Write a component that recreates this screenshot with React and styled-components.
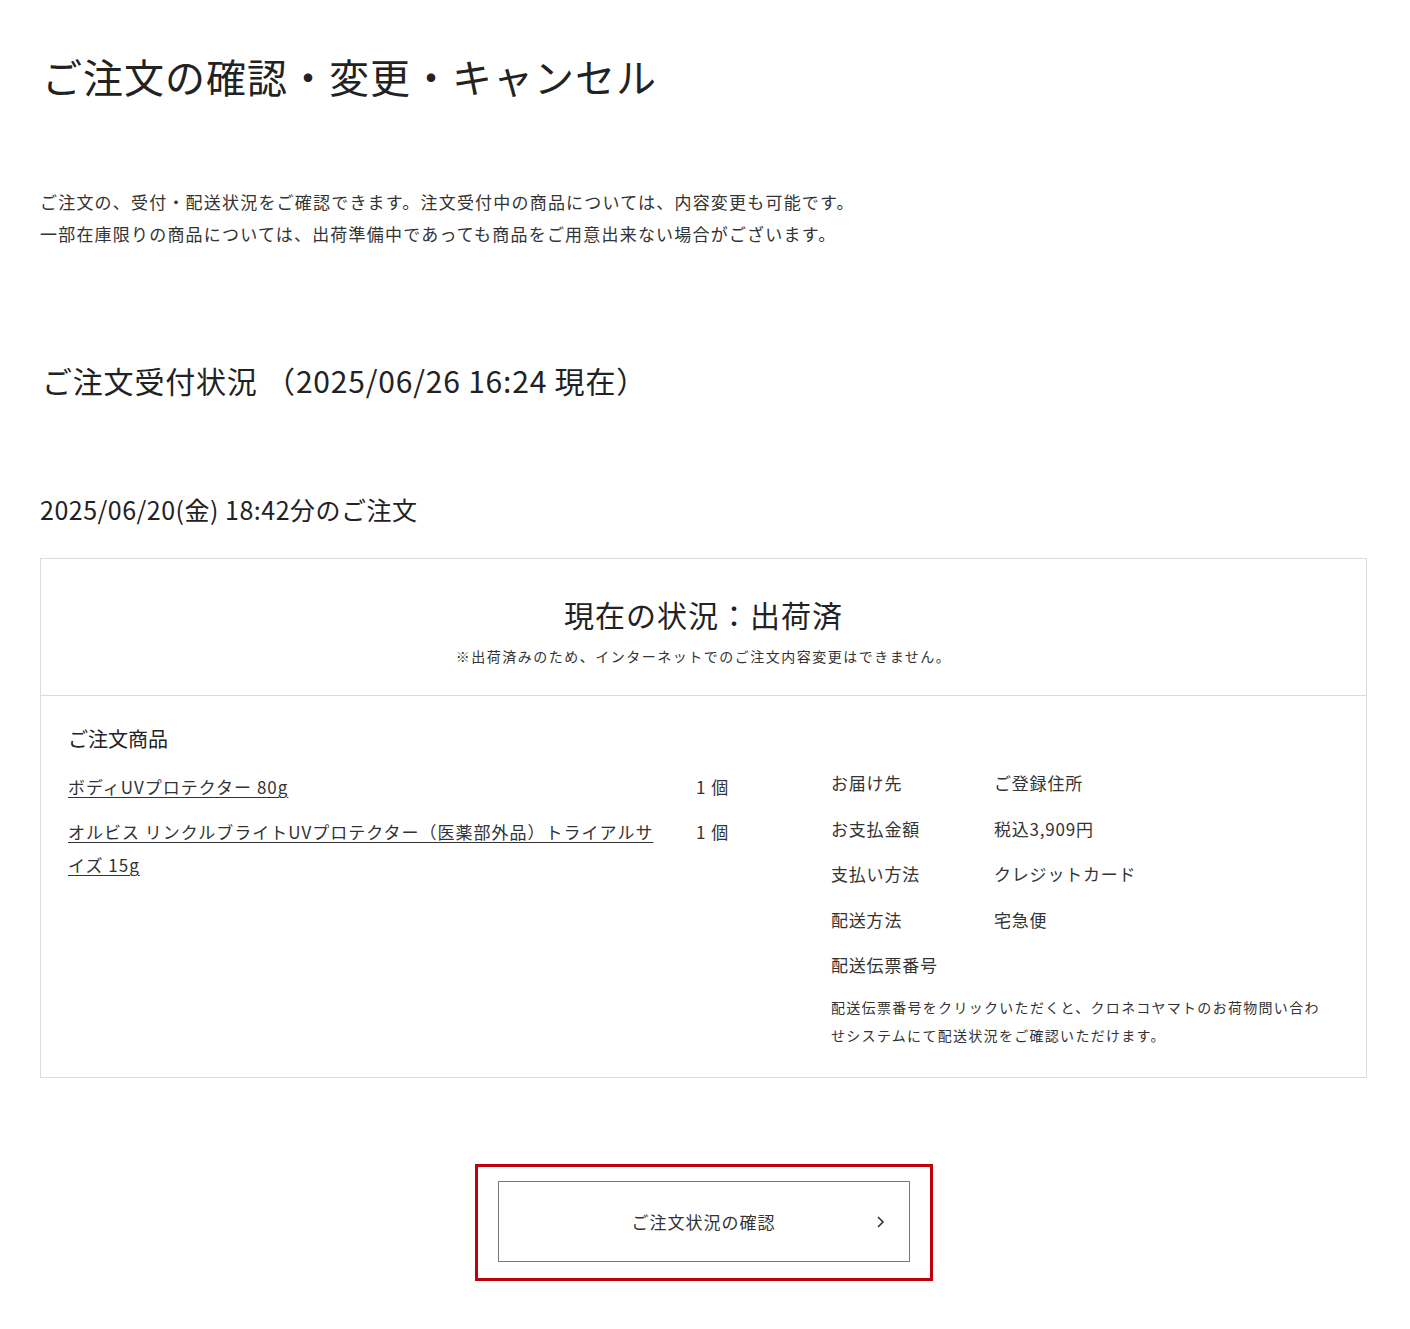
import React from "react";
import styled, { createGlobalStyle } from "styled-components";

const GlobalStyle = createGlobalStyle`
  html, body { margin: 0; padding: 0; background: #fff; }
  body {
    font-family: "Noto Sans CJK JP", "Open Sans", sans-serif;
    color: #333;
    -webkit-font-smoothing: antialiased;
  }
  * { box-sizing: border-box; }
`;

const Page = styled.main`
  width: 1410px;
  min-height: 1329px;
  padding: 48px 43px 48px 40px;
`;

const Title = styled.h1`
  margin: 0 0 0 2px;
  font-size: 40px;
  line-height: 56px;
  font-weight: 400;
  letter-spacing: 1px;
  color: #222;
`;

const Intro = styled.p`
  margin: 82px 0 0;
  font-size: 17px;
  line-height: 32px;
  letter-spacing: 1.2px;
  color: #333;
`;

const SectionTitle = styled.h2`
  margin: 109px 0 0 2px;
  font-size: 30px;
  line-height: 42px;
  font-weight: 400;
  letter-spacing: 0.8px;
  color: #222;
`;

const OrderDate = styled.h3`
  margin: 90px 0 31px;
  font-size: 25px;
  line-height: 36px;
  font-weight: 400;
  letter-spacing: 0.5px;
  color: #222;
`;

const Card = styled.section`
  border: 1px solid #dcdcdc;
`;

const StatusHead = styled.div`
  display: flex;
  flex-direction: column;
  align-items: center;
  gap: 10px;
  padding: 34px 20px 28px;
  border-bottom: 1px solid #dcdcdc;
`;

const StatusTitle = styled.div`
  font-size: 30px;
  line-height: 42px;
  letter-spacing: 1px;
  color: #222;
`;

const StatusNote = styled.div`
  font-size: 14px;
  line-height: 22px;
  letter-spacing: 1.5px;
  color: #333;
`;

const Body = styled.div`
  padding: 29px 40px 28px 27px;
`;

const BodyHeading = styled.div`
  font-size: 20px;
  line-height: 28px;
  color: #222;
  margin-bottom: 16px;
`;

const Columns = styled.div`
  display: grid;
  grid-template-columns: 763px 1fr;
`;

const ItemList = styled.ul`
  list-style: none;
  margin: 0;
  padding: 1px 0 0;
  display: flex;
  flex-direction: column;
  gap: 12px;
`;

const Item = styled.li`
  display: flex;
  align-items: flex-start;
`;

const ItemName = styled.a`
  width: 628px;
  padding-right: 30px;
  font-size: 17px;
  line-height: 33px;
  letter-spacing: 1px;
  color: #333;
  text-decoration: underline;
  text-underline-offset: 3px;
  text-decoration-thickness: 1px;
`;

const Qty = styled.span`
  font-size: 17px;
  line-height: 33px;
  color: #333;
  letter-spacing: 1px;
`;

const Details = styled.div`
  display: flex;
  flex-direction: column;
`;

const DetailList = styled.dl`
  margin: 0;
  display: grid;
  grid-template-columns: 163px 1fr;
  row-gap: 17.6px;
`;

const Term = styled.dt`
  font-size: 17px;
  line-height: 28px;
  letter-spacing: 0.8px;
  color: #333;
`;

const Desc = styled.dd`
  margin: 0;
  font-size: 17px;
  line-height: 28px;
  letter-spacing: 0.8px;
  color: #333;
`;

const DetailNote = styled.p`
  margin: 14px 0 0;
  width: 498px;
  font-size: 14px;
  line-height: 28px;
  letter-spacing: 1.3px;
  color: #333;
`;

const Actions = styled.div`
  display: flex;
  justify-content: center;
  margin-top: 86px;
`;

const Highlight = styled.div`
  border: 3px solid #c0000a;
  padding: 14px 20px 16px;
`;

const ConfirmButton = styled.button`
  position: relative;
  width: 412px;
  height: 81px;
  border: 1.5px solid #777;
  background: #fff;
  font-family: inherit;
  font-size: 17px;
  letter-spacing: 1px;
  color: #333;
  display: flex;
  align-items: center;
  justify-content: center;
  cursor: pointer;
`;

const Chevron = styled.svg`
  position: absolute;
  right: 24px;
  top: 50%;
  transform: translateY(-50%);
`;

export default function App() {
  return (
    <>
      <GlobalStyle />
      <Page>
        <Title>ご注文の確認・変更・キャンセル</Title>
        <Intro>
          ご注文の、受付・配送状況をご確認できます。注文受付中の商品については、内容変更も可能です。
          <br />
          一部在庫限りの商品については、出荷準備中であっても商品をご用意出来ない場合がございます。
        </Intro>
        <SectionTitle>ご注文受付状況 （2025/06/26 16:24 現在）</SectionTitle>
        <OrderDate>2025/06/20(金) 18:42分のご注文</OrderDate>
        <Card>
          <StatusHead>
            <StatusTitle>現在の状況：出荷済</StatusTitle>
            <StatusNote>※出荷済みのため、インターネットでのご注文内容変更はできません。</StatusNote>
          </StatusHead>
          <Body>
            <BodyHeading>ご注文商品</BodyHeading>
            <Columns>
              <ItemList>
                <Item>
                  <ItemName href="#">ボディUVプロテクター 80g</ItemName>
                  <Qty>1 個</Qty>
                </Item>
                <Item>
                  <ItemName href="#">
                    オルビス リンクルブライトUVプロテクター（医薬部外品）トライアルサイズ 15g
                  </ItemName>
                  <Qty>1 個</Qty>
                </Item>
              </ItemList>
              <Details>
                <DetailList>
                  <Term>お届け先</Term>
                  <Desc>ご登録住所</Desc>
                  <Term>お支払金額</Term>
                  <Desc>税込3,909円</Desc>
                  <Term>支払い方法</Term>
                  <Desc>クレジットカード</Desc>
                  <Term>配送方法</Term>
                  <Desc>宅急便</Desc>
                  <Term>配送伝票番号</Term>
                  <Desc />
                </DetailList>
                <DetailNote>
                  配送伝票番号をクリックいただくと、クロネコヤマトのお荷物問い合わせシステムにて配送状況をご確認いただけます。
                </DetailNote>
              </Details>
            </Columns>
          </Body>
        </Card>
        <Actions>
          <Highlight>
            <ConfirmButton type="button">
              ご注文状況の確認
              <Chevron width="9" height="14" viewBox="0 0 9 14" aria-hidden="true">
                <polyline points="2,2 7,7 2,12" fill="none" stroke="#333" strokeWidth="1.6" />
              </Chevron>
            </ConfirmButton>
          </Highlight>
        </Actions>
      </Page>
    </>
  );
}
